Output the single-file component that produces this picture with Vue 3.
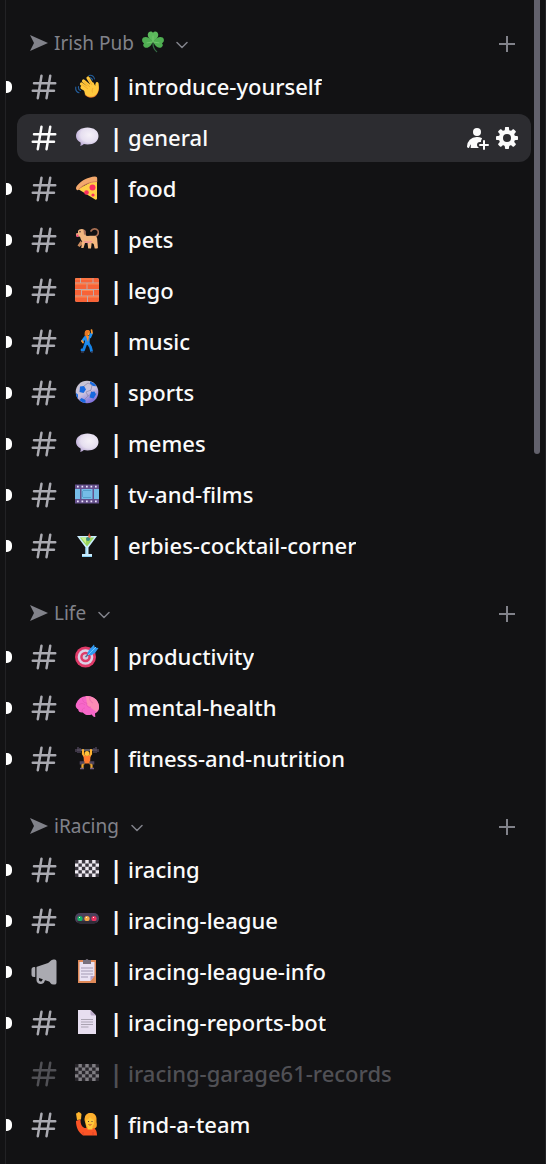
<script setup>
import { ref } from 'vue'

const selected = ref('general')
const collapsed = ref([])

const categories = [
  {
    name: 'Irish Pub',
    emoji: 'shamrock',
    channels: [
      { emoji: 'wave', name: 'introduce-yourself', unread: true },
      { emoji: 'speech', name: 'general' },
      { emoji: 'pizza', name: 'food', unread: true },
      { emoji: 'dog', name: 'pets', unread: true },
      { emoji: 'brick', name: 'lego', unread: true },
      { emoji: 'dancer', name: 'music', unread: true },
      { emoji: 'soccer', name: 'sports', unread: true },
      { emoji: 'speech', name: 'memes', unread: true },
      { emoji: 'film', name: 'tv-and-films', unread: true },
      { emoji: 'cocktail', name: 'erbies-cocktail-corner', unread: true }
    ]
  },
  {
    name: 'Life',
    channels: [
      { emoji: 'dart', name: 'productivity', unread: true },
      { emoji: 'brain', name: 'mental-health', unread: true },
      { emoji: 'lifter', name: 'fitness-and-nutrition', unread: true }
    ]
  },
  {
    name: 'iRacing',
    channels: [
      { emoji: 'flag', name: 'iracing', unread: true },
      { emoji: 'lights', name: 'iracing-league', unread: true },
      { emoji: 'clipboard', name: 'iracing-league-info', unread: true, announcement: true },
      { emoji: 'page', name: 'iracing-reports-bot', unread: true },
      { emoji: 'flag', name: 'iracing-garage61-records', muted: true },
      { emoji: 'hand', name: 'find-a-team', unread: true }
    ]
  }
]

function toggle(name) {
  collapsed.value = collapsed.value.includes(name)
    ? collapsed.value.filter((n) => n !== name)
    : [...collapsed.value, name]
}
</script>

<template>
  <svg class="sprite" aria-hidden="true">
    <symbol id="i-hash" viewBox="0 0 24 24">
      <path fill="currentColor" fill-rule="evenodd" d="M10.99 3.16A1 1 0 1 0 9 2.84L8.15 8H4a1 1 0 0 0 0 2h3.82l-.67 4H3a1 1 0 1 0 0 2h3.82l-.8 4.84a1 1 0 0 0 1.97.32L8.85 16h4.97l-.8 4.84a1 1 0 0 0 1.97.32l.86-5.16H20a1 1 0 1 0 0-2h-3.82l.67-4H21a1 1 0 1 0 0-2h-3.82l.8-4.84a1 1 0 1 0-1.97-.32L15.15 8h-4.97l.81-4.84ZM14.15 14l.67-4H9.85l-.67 4h4.97Z" />
    </symbol>
    <symbol id="i-megaphone" viewBox="0 0 24 24">
      <path fill="currentColor" fill-rule="evenodd" d="M19.56 2a3 3 0 0 0-2.46 1.28 3.85 3.85 0 0 1-1.86 1.42l-8.9 3.18a.5.5 0 0 0-.34.47v10.09a3 3 0 0 0 2.27 2.9l.62.16c1.57.4 3.15-.56 3.55-2.12a.92.92 0 0 1 1.23-.63l2.36.94c.42.27.79.62 1.07 1.03A3 3 0 0 0 19.56 22h.94c.83 0 1.5-.67 1.5-1.5v-17c0-.83-.67-1.5-1.5-1.5h-.94Zm-8.53 15.8L8 16.7v1.73a1 1 0 0 0 .76.97l.62.15c.5.13 1-.17 1.12-.67.1-.41.29-.78.53-1.1ZM2 10c0-1.1.9-2 2-2h.5c.28 0 .5.22.5.5v7a.5.5 0 0 1-.5.5H4a2 2 0 0 1-2-2v-4Z" />
    </symbol>
    <symbol id="i-invite" viewBox="0 0 24 24">
      <g fill="currentColor">
        <path d="M19 14a1 1 0 0 1 1 1v3h3a1 1 0 0 1 0 2h-3v3a1 1 0 0 1-2 0v-3h-3a1 1 0 1 1 0-2h3v-3a1 1 0 0 1 1-1Z" />
        <path d="M16.83 12.93c.26-.27.26-.75-.08-.92A9.5 9.5 0 0 0 12.47 11h-.94A9.53 9.53 0 0 0 2 20.53c0 .81.66 1.47 1.47 1.47h.22c.24 0 .44-.17.5-.4.29-1.12.84-2.17 1.32-2.91.14-.21.43-.1.4.15l-.26 2.61c-.02.3.2.55.5.55h7.64c.12 0 .17-.31.06-.36C12.82 21.14 12 20.22 12 19a3 3 0 0 1 3-3h.5a.5.5 0 0 0 .5-.5V15c0-.8.31-1.53.83-2.07Z" />
        <path d="M12 10a4 4 0 1 0 0-8 4 4 0 0 0 0 8Z" />
      </g>
    </symbol>
    <symbol id="i-gear" viewBox="0 0 24 24">
      <path fill="currentColor" fill-rule="evenodd" d="M10.56 1.1c-.46.05-.7.53-.64.98.18 1.16-.19 2.2-.98 2.53-.8.33-1.79-.15-2.49-1.1-.27-.36-.78-.52-1.14-.24-.77.59-1.45 1.27-2.04 2.04-.28.36-.12.87.24 1.14.96.7 1.43 1.7 1.1 2.49-.33.8-1.37 1.16-2.53.98-.45-.07-.93.18-.99.64a11.1 11.1 0 0 0 0 2.88c.06.46.54.7.99.64 1.16-.18 2.2.19 2.53.98.33.8-.14 1.79-1.1 2.49-.36.27-.52.78-.24 1.14.59.77 1.27 1.45 2.04 2.04.36.28.87.12 1.14-.24.7-.95 1.7-1.43 2.49-1.1.8.33 1.16 1.37.98 2.53-.07.45.18.93.64.99a11.1 11.1 0 0 0 2.88 0c.46-.06.7-.54.64-.99-.18-1.16.19-2.2.98-2.53.8-.33 1.79.14 2.49 1.1.27.36.78.52 1.14.24.77-.59 1.45-1.27 2.04-2.04.28-.36.12-.87-.24-1.14-.96-.7-1.43-1.7-1.1-2.49.33-.8 1.37-1.16 2.53-.98.45.07.93-.18.99-.64a11.1 11.1 0 0 0 0-2.88c-.06-.46-.54-.7-.99-.64-1.16.18-2.2-.19-2.53-.98-.33-.8.14-1.79 1.1-2.49.36-.27.52-.78.24-1.14a11.07 11.07 0 0 0-2.04-2.04c-.36-.28-.87-.12-1.14.24-.7.96-1.7 1.43-2.49 1.1-.8-.33-1.16-1.37-.98-2.53.07-.45-.18-.93-.64-.99a11.1 11.1 0 0 0-2.88 0ZM16 12a4 4 0 1 1-8 0 4 4 0 0 1 8 0Z" />
    </symbol>

    <symbol id="e-shamrock" viewBox="0 0 24 24">
      <path d="M12 13c0 4 1 7 4 9.500" fill="none" stroke="#356b45" stroke-width="1.4" stroke-linecap="round" />
      <path fill="#5cb85c" d="M12 12C8 9 5.500 6 6.500 3 7.300.2 10.500-.2 12 2c1.500-2.200 4.700-1.800 5.500 1C18.500 6 16 9 12 12Z" />
      <path fill="#4fae52" d="M12 11.500c-2 5-5.500 8-9 6.400-2.200-1.200-2-3.600-.7-4.600C0 12.500-.8 9 1.500 7.200 4.500 5.500 8.500 7.500 12 11.500Z" />
      <path fill="#4fae52" d="M12 11.500c2 5 5.500 8 9 6.400 2.200-1.200 2-3.600.7-4.600C24 12.500 24.800 9 22.500 7.200 19.500 5.500 15.500 7.500 12 11.500Z" />
      <path d="M12 12V5M12 12l-7 1M12 12l7 1" stroke="#7bcb74" stroke-width=".8" />
    </symbol>
    <symbol id="e-wave" viewBox="0 0 24 24">
      <path d="M14 1.500c3-.8 5 1 5.500 3.500M14.500 4c1.600-.4 2.600.5 3 2M.8 13c-.5 3 .8 5 3.200 5.800M3.500 12.500c-.3 2 .5 3.500 2 4" fill="none" stroke="#245e9c" stroke-width="1.1" stroke-linecap="round" />
      <path fill="#e57328" d="M9.500 20.500c2.500 3.300 8 4.500 11.500 1.200 3-3 3-7 3-11l-3 9Z" />
      <path d="m15.500 13-7-6M13 15l-6.500-5M13 17l-6-3.500M18 12l-5-8" stroke="#ffc83d" stroke-width="3.200" stroke-linecap="round" />
      <path fill="#ffc83d" d="m9 16 9-8c1 1.500 1.500 2.500 2.200 4 0-2 .4-3.500 1.500-4 1.300-.3 2 .7 2 2.300.2 4.500 0 8-3 10.700-3.500 3-8.200 2-10.700-.8Z" />
      <path d="m9 7.500 6 5.500M7 10.500l6 4.500M13.500 5l3.500 6M18 14c-1 1.500-1 3-.5 4.500" fill="none" stroke="#ed9b25" stroke-width=".6" />
    </symbol>
    <symbol id="e-speech" viewBox="0 0 24 24">
      <defs>
        <radialGradient id="g-speech" cx=".6" cy=".4" r=".65">
          <stop offset="0" stop-color="#f5f1f8" />
          <stop offset=".6" stop-color="#e6dff0" />
          <stop offset="1" stop-color="#b9a7d4" />
        </radialGradient>
      </defs>
      <path fill="url(#g-speech)" d="M12.500 2.500C19 2.500 23.500 6 23.500 11s-4.500 8.500-11 8.500c-1.300 0-2.500-.2-3.600-.5-1 1-2.200 1.700-3.700 2 .5-1 .6-2.200.4-3.500C2.700 16 1 13.800 1 11c0-5 5-8.500 11.500-8.500Z" />
    </symbol>
    <symbol id="e-pizza" viewBox="0 0 24 24">
      <path fill="#ffcf47" d="M22 3v19.500c0 1-.8 1.500-1.800 1L3 13Z" />
      <path fill="#f3a86c" d="M2 14c-1.500-1-1.200-3 .2-4.600C6.500 4.500 13 1 20 .5c1.500 0 2.300.8 2.200 2V6C15 6 9 8.500 4.500 13c-.8.900-1.700 1.500-2.500 1Z" />
      <path d="M3.500 13.500C8.500 8.500 14.500 6 22 5.500" fill="none" stroke="#d1785a" stroke-width=".8" />
      <circle cx="17.500" cy="11.500" r="3" fill="#f92f60" />
      <circle cx="11.500" cy="16.500" r="2.300" fill="#f92f60" />
      <circle cx="18" cy="19" r="1.600" fill="#f92f60" />
    </symbol>
    <symbol id="e-dog" viewBox="0 0 24 24">
      <path d="M20 9.500c3-1 4-3.500 2.800-6C21.300 1.300 17.500 1.300 16 4" fill="none" stroke="#a86f52" stroke-width="1.700" stroke-linecap="round" />
      <path fill="#c98a5e" d="m5.500 14-3 4.500 2 1.500 4-4Zm13 0 2.500 7h2L22 13Z" />
      <path fill="#f4b77f" d="M3 4c1.300-2 4.500-2.700 6.500-.8l1.500 5.600c3 .4 6.500-.6 9.500.2 2.200 1.200 1.800 4 1.800 6.500 0 2 .2 3.500.2 6h-2.800l-1-4.500-2-1-.7 5.500h-2.800L12.500 16H10l-1.500 5H6.200l1-6.500C5.500 12.500 5.500 11 5 9.800L1 9.300V6.500L3 6Z" />
      <path fill="#aa705a" d="M8.500 2.500c2.300.3 3 2 2 4.500L9 8Z" />
      <circle cx="5" cy="4.800" r=".8" fill="#402a32" />
      <path fill="#ed4b7c" d="M1 7.500h2.500V10H1.700Z" />
      <path d="M9 14.500c3 1.200 5 1 8 0" fill="none" stroke="#ee8aa0" stroke-width="1.300" />
    </symbol>
    <symbol id="e-brick" viewBox="0 0 24 24">
      <rect width="24" height="24" rx="2" fill="#c0aaa7" />
      <path fill="#f86337" d="M2 0h3v4.500H0V2q0-2 2-2Zm4 0h11.500v4.500H6Zm12.500 0H22q2 0 2 2v2.500h-5.500ZM0 5.500h11.500v5.500H0Zm12.500 0H24v5.500H12.500ZM0 12h6v5.500H0Zm7 0h11v5.500H7Zm12 0h5v5.500h-5ZM0 18.500h12V24H2q-2 0-2-2Zm13 0h11V22q0 2-2 2h-9Z" />
      <path d="M0 1h5m1 0h11.500M0 6h11.500m1 0H24M7 12.500h11M0 19h12m1 0h11" stroke="#ff8851" stroke-width="1" />
    </symbol>
    <symbol id="e-dancer" viewBox="0 0 24 24">
      <path d="m11 14-2.500 7H7M13 14l2.500 4 1 4" fill="none" stroke="#1684e8" stroke-width="2.800" stroke-linecap="round" stroke-linejoin="round" />
      <path d="M10 8.500 7.500 12m7.500-4 1.500-3.500" stroke="#2293f4" stroke-width="2.600" stroke-linecap="round" />
      <path fill="#208df0" d="m9.500 7 5.500-.5-.5 9H10Z" />
      <path fill="#ff8c2d" d="M11 7h3l-1 6Z" />
      <circle cx="12.300" cy="4" r="2.500" fill="#ffb13b" />
      <path fill="#e97824" d="M10 2.500c1-2 5-2 5 .5l-1.500 1-1 3.500-3-1Z" />
      <path d="m17 4-.5-3M7 12l1 1.500" stroke="#ff982e" stroke-width="1.700" stroke-linecap="round" />
      <path d="M6 23h3m7 0h2" stroke="#353b55" stroke-width="1.400" />
    </symbol>
    <symbol id="e-soccer" viewBox="0 0 24 24">
      <defs>
        <linearGradient id="g-soccer" x2=".5" y2="1">
          <stop offset="0" stop-color="#c7c5ce" />
          <stop offset=".6" stop-color="#c9c1df" />
          <stop offset="1" stop-color="#8576dd" />
        </linearGradient>
      </defs>
      <circle cx="12" cy="12" r="11.300" fill="url(#g-soccer)" />
      <path d="m9 6 4-3 4 2-1 5-5 2m0 0 2 4-4 4m4-4 5-3 4 1m-7-4 3 3" fill="none" stroke="#8a86a9" stroke-width=".7" />
      <path fill="#1769e0" d="m5 6.500 4-.5 2 3.500-2.500 3.500-4-1ZM15 1.500c3 .7 5 2.300 6.300 4.700L18 6l-3-2.500ZM16 12l3.500-.5 1.500 3-2.500 4-4-1ZM1 13l2 1.500v4C1.500 17 1 15 1 13ZM6.500 18l4 2v3C8 22.500 6 21.500 4.500 20Z" />
    </symbol>
    <symbol id="e-film" viewBox="0 0 24 24">
      <path fill="#65508c" d="M0 2.500h24v19H0Z" />
      <path fill="#75bce8" d="M0 7h5v10H0Zm6.500 0h11v10h-11ZM19 7h5v10h-5Z" />
      <path fill="#559fcc" d="M8 8h8v1H8Zm0 7h8v1H8ZM7 9h1v6H7Z" />
      <path d="M2 4.700h21M2 19.300h21" stroke="#eee4ff" stroke-width="1.700" stroke-dasharray="1.700 2.800" />
    </symbol>
    <symbol id="e-cocktail" viewBox="0 0 24 24">
      <path d="m12 9 2.500-8.500" stroke="#e65b42" stroke-width="1" />
      <path fill="#c9edff" d="M2 3h20l-8.500 11.500V21H17v3H7v-3h3.500v-6.500Z" />
      <path fill="#9ad65d" d="M4.800 4.500h14.400L12 13.500Z" />
      <path fill="#c9f18d" d="M6 4.500h5v6Z" />
      <circle cx="13" cy="6" r="2" fill="#3a8d83" />
      <circle cx="14.500" cy="3.500" r="1.200" fill="#ec6645" />
      <path fill="#8bd4f7" d="M10.500 14.500h1V21h-1ZM7 23h10v1H7Z" />
    </symbol>
    <symbol id="e-dart" viewBox="0 0 24 24">
      <circle cx="10.500" cy="13" r="10.500" fill="#df3a68" />
      <circle cx="10.500" cy="13" r="7.800" fill="#ded1e8" />
      <circle cx="10.500" cy="13" r="5.300" fill="#df3a68" />
      <circle cx="10.500" cy="13" r="2.800" fill="#d6c9de" />
      <path d="m10.500 13 8-7" stroke="#486c96" stroke-width="1.500" />
      <path fill="#319af2" d="m12 10 2-4 5-5.500.8 3L23.500 4 20 9l-4 2.500Z" />
      <path d="m13 11 8-8" stroke="#70c9ff" stroke-width="1" />
    </symbol>
    <symbol id="e-brain" viewBox="0 0 24 24">
      <path fill="#f767c9" d="M2 7C4 3 8 1 13 1c6 0 11 5 11 11 0 3-1 5-4 6.500l.3 3.500c-2 .2-3-1.500-3.500-2.500-4 1.200-7 .5-9-2-3 .3-4.500-1-4.500-3C.5 13-.2 10 2 7Z" />
      <path fill="#fd8cb5" d="M11 1.200C18 .5 24 5 24 12c0 2-1 4-2.500 5L12 10Z" />
      <path d="M8 3c-1 3 1 5 4 5m3-6c-1 3 1 5 3 6m-6 0c-1 3 1 5 4 4m-12-2c2-2 4-2 6 0m-3 7c0-3 1-4 3-4" fill="none" stroke="#e052ac" stroke-width=".5" />
    </symbol>
    <symbol id="e-lifter" viewBox="0 0 24 24">
      <path d="M2 4h20" stroke="#a09bab" stroke-width="1" />
      <path d="M3 1v6M5 2v5M21 1v6M19 2v5M1 3v3M23 3v3" stroke="#4b4254" stroke-width="1.500" />
      <path d="M8 4v4l2 3m6-7v4l-2 3" fill="none" stroke="#ffb332" stroke-width="2.200" stroke-linecap="round" />
      <path fill="#ff7a30" d="M8.500 9.500h7l-.5 8H9Z" />
      <circle cx="12" cy="7.500" r="2.500" fill="#ffc13b" />
      <path d="M9.500 17.500h-2V22m7-4.500h2V22" fill="none" stroke="#eea72f" stroke-width="2.200" />
      <path d="M9.500 16.500H6v2m8.500-2H18v2" fill="none" stroke="#51465e" stroke-width="2.600" />
      <path d="M5 22.500h4m6 0h4" stroke="#77627f" stroke-width="1.500" />
    </symbol>
    <symbol id="e-flag" viewBox="0 0 24 24">
      <path fill="#eeeaf2" d="M0 3h24v17H0Z" />
      <path d="M0 4.700h24M0 11.500h24M0 18.300h24" stroke="#3a363f" stroke-width="3.400" stroke-dasharray="3.430 3.430" />
      <path d="M3.430 8.100H24M3.430 14.900H24" stroke="#3a363f" stroke-width="3.400" stroke-dasharray="3.430 3.430" />
    </symbol>
    <symbol id="e-lights" viewBox="0 0 24 24">
      <rect y="5" width="24" height="10.500" rx="5" fill="#4c405b" />
      <path d="M3 14h18" stroke="#302c38" stroke-width="2" stroke-linecap="round" />
      <circle cx="5" cy="10.500" r="2.600" fill="#14b667" />
      <circle cx="12" cy="10.500" r="2.600" fill="#f8a948" />
      <circle cx="19" cy="10.500" r="2.600" fill="#ee315f" />
      <path d="M4 9.500h1m6 0h1m6 0h1" stroke="#fff0d9" stroke-width="1" />
    </symbol>
    <symbol id="e-clipboard" viewBox="0 0 24 24">
      <path fill="#df8958" d="M3 1h18v23H3Z" />
      <path fill="#e9e2f3" d="M4.500 3h15v13.500L15.500 22h-11Z" />
      <path fill="#b7a1ca" d="M19.500 17h-4v5Z" />
      <path fill="#77717e" d="M8 1h2.500q1.500-2 3 0H16v4H8Z" />
      <path d="M6 9h12M6 12h12M6 15h12M6 18h7" stroke="#a39ab3" stroke-width="1" />
    </symbol>
    <symbol id="e-page" viewBox="0 0 24 24">
      <path fill="#e7def0" d="M3 0h12.500L21 5.500V24H3Z" />
      <path fill="#b9a9c8" d="M15.500 0 21 5.500h-4q-1.500 0-1.500-1.500Z" />
      <path d="M6 9.500h12M6 12h12M6 14.500h12M6 17h7.500" stroke="#aaa3b2" stroke-width="1" />
    </symbol>
    <symbol id="e-hand" viewBox="0 0 24 24">
      <path fill="#f7a325" d="M9.500 8c0-4 2-7 6-7 5 0 6.500 4 6 7-.3 3 1 4 0 7l-3.500 3h-6Z" />
      <path fill="#fb5426" d="M1 9q2-1.500 4.500-1c0 4 1 6.500 4 8h8c3 0 4.500 3 4.500 7v.5H8C3 20 1 15 1 9Z" />
      <path fill="#ffc83b" d="M12.500 14h5v3.500h-5Z" />
      <ellipse cx="15" cy="9.500" rx="4.300" ry="5.800" fill="#ffc83b" />
      <path fill="#ffb12e" d="M10 8C9.500 3 12.500 1 15.500 1c4 0 6 3 5 7-3 0-4-1-5.500-3-1 2-2.500 3-5 3Z" />
      <path fill="#ffb52e" d="M1 1.500 2.500 1l.5-1 2 .5L6.500 2 6 7.500 2 8Z" />
      <path d="M13.500 9v1m3.500-1v1" stroke="#553b3b" stroke-width="1" />
      <path d="M13.500 12.500q1.500 1.300 3 0" fill="none" stroke="#cb4932" stroke-width="1" />
      <path d="M8 20v3m10-3v3" stroke="#d8402d" stroke-width=".8" />
    </symbol>
  </svg>

  <nav class="sidebar" aria-label="Channels">
    <section v-for="cat in categories" :key="cat.name" class="category">
      <header class="category-header">
        <button type="button" class="category-toggle" @click="toggle(cat.name)">
          <svg class="arrow" viewBox="0 0 18 16" aria-hidden="true">
            <path fill="currentColor" d="M0 0 18 8 0 16 4 8Z" />
          </svg>
          <span>{{ cat.name }}</span>
          <svg v-if="cat.emoji" class="emoji" aria-hidden="true"><use :href="'#e-' + cat.emoji" /></svg>
          <svg class="chevron" viewBox="0 0 12 8" aria-hidden="true">
            <path d="m1 1.500 5 5 5-5" fill="none" stroke="currentColor" stroke-width="1.500" stroke-linecap="round" stroke-linejoin="round" />
          </svg>
        </button>
        <button type="button" class="add" aria-label="Create Channel">
          <svg viewBox="0 0 16 16" aria-hidden="true">
            <path d="M8 0v16M0 8h16" stroke="currentColor" stroke-width="2" />
          </svg>
        </button>
      </header>

      <ul v-show="!collapsed.includes(cat.name)" class="channels">
        <li
          v-for="channel in cat.channels"
          :key="channel.name"
          class="channel"
          :class="{ selected: selected === channel.name, muted: channel.muted }"
        >
          <span v-if="channel.unread" class="unread"></span>
          <div class="row">
            <a href="#" class="link" @click.prevent="selected = channel.name">
              <svg class="type" aria-hidden="true"><use :href="channel.announcement ? '#i-megaphone' : '#i-hash'" /></svg>
              <svg class="emoji" aria-hidden="true"><use :href="'#e-' + channel.emoji" /></svg>
              <span class="divider">|</span>
              <span class="name">{{ channel.name }}</span>
            </a>
            <div v-if="selected === channel.name" class="actions">
              <button type="button" aria-label="Create Invite"><svg aria-hidden="true"><use href="#i-invite" /></svg></button>
              <button type="button" aria-label="Edit Channel"><svg aria-hidden="true"><use href="#i-gear" /></svg></button>
            </div>
          </div>
        </li>
      </ul>
    </section>
    <div class="scroll-thumb"></div>
  </nav>
</template>

<style>
body {
  margin: 0;
  background: #121214;
}
</style>

<style scoped>
.sprite {
  position: absolute;
  width: 0;
  height: 0;
}

.sidebar {
  position: relative;
  box-sizing: border-box;
  min-height: 100vh;
  margin-left: 5px;
  padding: 3px 0 12px;
  border-left: 1px solid #222225;
  border-right: 1px solid #222225;
  background: #121214;
  color: #fbfbfb;
  font-family: "Noto Sans", "Open Sans", sans-serif;
}

button {
  display: flex;
  align-items: center;
  padding: 0;
  border: 0;
  background: none;
  color: inherit;
  font: inherit;
  cursor: pointer;
}

.category {
  padding-top: 24px;
}

.category-header {
  display: flex;
  align-items: center;
  justify-content: space-between;
  height: 34px;
  padding: 0 30px 2px 24px;
  color: #81828a;
}

.category-toggle {
  padding-bottom: 2px;
  font-size: 19px;
  line-height: 24px;
}

.arrow {
  width: 18px;
  height: 16px;
  margin-right: 6px;
}

.category-toggle .emoji {
  width: 22px;
  height: 22px;
  margin-left: 8px;
}

.chevron {
  width: 12px;
  height: 8px;
  margin: 4px 0 0 12px;
}

.add svg {
  width: 16px;
  height: 16px;
}

.channels {
  margin: 0;
  padding: 0;
  list-style: none;
}

.channel {
  position: relative;
  padding: 0 14px 3px 11px;
}

.unread {
  position: absolute;
  top: 18px;
  left: 0;
  width: 6px;
  height: 12px;
  border-radius: 0 5px 5px 0;
  background: #fff;
}

.row {
  display: flex;
  align-items: center;
  height: 48px;
  padding: 0 12px;
  border-radius: 12px;
}

.link {
  display: flex;
  flex: 1;
  align-items: center;
  min-width: 0;
  color: inherit;
  font-size: 22px;
  font-weight: 500;
  line-height: 30px;
  text-decoration: none;
}

.type {
  width: 30px;
  height: 30px;
  margin-right: 16px;
  color: #aaaab1;
}

.emoji {
  flex: none;
  width: 24px;
  height: 24px;
  margin-bottom: 2px;
}

.divider {
  width: 24px;
  margin-left: 5px;
  padding-bottom: 2px;
  font-size: 24px;
  font-weight: 700;
  text-align: center;
}

.name {
  padding-bottom: 2px;
  overflow: hidden;
  text-overflow: ellipsis;
  white-space: nowrap;
}

.selected .row {
  background: #2c2c30;
}

.selected .type {
  color: #fbfbfb;
}

.muted .link {
  color: #505055;
}

.muted .type {
  color: #505055;
}

.muted .emoji {
  opacity: 0.5;
}

.actions {
  display: flex;
  gap: 6px;
}

.actions svg {
  width: 24px;
  height: 24px;
}

.scroll-thumb {
  position: absolute;
  top: 0;
  right: 5px;
  width: 6px;
  height: 39%;
  border-radius: 0 0 3px 3px;
  background: #62616c;
}
</style>
